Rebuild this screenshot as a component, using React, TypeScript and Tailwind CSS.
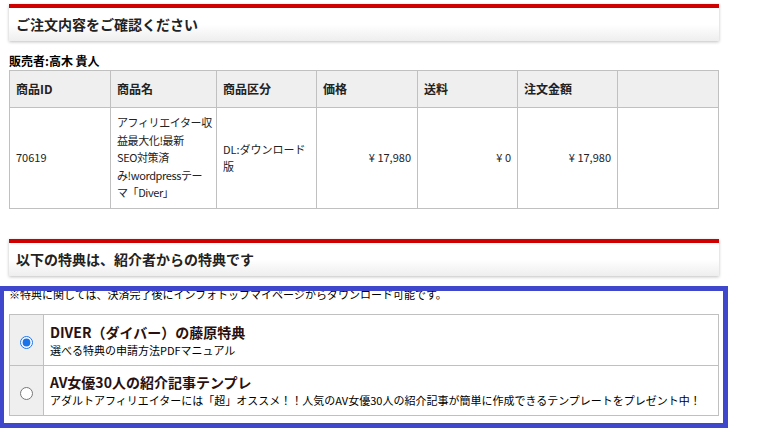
import React from "react";

const font = { fontFamily: '"Noto Sans CJK JP", "Noto Sans", sans-serif' };

function SectionHeading({ title }: { title: string }) {
  return (
    <div className="w-[710px] border-t-4 border-[#d10000] bg-gradient-to-b from-white from-50% to-[#eeeeee] shadow-[0_1px_3px_rgba(0,0,0,0.25)]">
      <div className="flex h-[33px] items-center px-[7px] text-[14px] font-bold text-[#222]">
        {title}
      </div>
    </div>
  );
}

const cell = "border border-[#c0c0c0] px-[6px] align-middle";

export default function App() {
  return (
    <div style={font} className="relative h-[434px] w-[761px] overflow-hidden bg-white text-[#222]">
      <div className="pl-[9px] pt-[4px]">
        <SectionHeading title="ご注文内容をご確認ください" />

        <p className="mt-[13px] text-[12px] font-bold leading-[14px] text-black">販売者:高木 貴人</p>

        <table className="mt-[2px] w-[710px] table-fixed border-collapse text-[11px] leading-[17.5px]">
          <colgroup>
            <col className="w-[101px]" />
            <col className="w-[106px]" />
            <col className="w-[100px]" />
            <col className="w-[101px]" />
            <col className="w-[100px]" />
            <col className="w-[100px]" />
            <col className="w-[101px]" />
          </colgroup>
          <thead>
            <tr className="h-[37px] bg-[#efefef] text-left text-[12px] font-bold">
              <th className={cell}>商品ID</th>
              <th className={cell}>商品名</th>
              <th className={cell}>商品区分</th>
              <th className={cell}>価格</th>
              <th className={cell}>送料</th>
              <th className={cell}>注文金額</th>
              <th className={cell}></th>
            </tr>
          </thead>
          <tbody>
            <tr className="h-[101px]">
              <td className={cell}>70619</td>
              <td className={`${cell} whitespace-nowrap tracking-[-0.4px]`}>
                アフィリエイター収
                <br />
                益最大化!最新
                <br />
                SEO対策済
                <br />
                み!wordpressテー
                <br />
                マ「Diver」
              </td>
              <td className={cell}>
                DL:ダウンロード
                <br />
                版
              </td>
              <td className={`${cell} text-right`}>¥ 17,980</td>
              <td className={`${cell} text-right`}>¥ 0</td>
              <td className={`${cell} text-right`}>¥ 17,980</td>
              <td className={cell}></td>
            </tr>
          </tbody>
        </table>

        <div className="mt-[30px]">
          <SectionHeading title="以下の特典は、紹介者からの特典です" />
        </div>

        <p className="mt-[11px] text-[11px] leading-[14px] text-black">
          ※特典に関しては、決済完了後にインフォトップマイページからダウンロード可能です。
        </p>

        <table className="mt-[13px] w-[710px] table-fixed border-collapse">
          <colgroup>
            <col className="w-[34px]" />
            <col />
          </colgroup>
          <tbody>
            <tr className="h-[51px]">
              <td className="border border-[#c0c0c0] bg-[#efefef] text-center align-middle">
                <input type="radio" name="bonus" defaultChecked className="h-[13px] w-[13px] accent-[#1a73e8] align-middle" />
              </td>
              <td className="border border-[#c0c0c0] pl-[6px] align-middle">
                <div className="text-[14px] font-bold leading-[20px] text-[#2a1010]">DIVER（ダイバー）の藤原特典</div>
                <div className="text-[11px] leading-[17px] text-black">選べる特典の申請方法PDFマニュアル</div>
              </td>
            </tr>
            <tr className="h-[50px]">
              <td className="border border-[#c0c0c0] bg-[#efefef] text-center align-middle">
                <input type="radio" name="bonus" className="h-[13px] w-[13px] align-middle" />
              </td>
              <td className="border border-[#c0c0c0] pl-[6px] align-middle">
                <div className="text-[14px] font-bold leading-[20px] text-[#2a1010]">AV女優30人の紹介記事テンプレ</div>
                <div className="text-[11px] leading-[17px] text-black">
                  アダルトアフィリエイターには「超」オススメ！！人気のAV女優30人の紹介記事が簡単に作成できるテンプレートをプレゼント中！
                </div>
              </td>
            </tr>
          </tbody>
        </table>
      </div>

      <div className="pointer-events-none absolute left-[-1px] top-[286px] h-[142px] w-[729px] border-[5px] border-[#3f48cc]" />
    </div>
  );
}
